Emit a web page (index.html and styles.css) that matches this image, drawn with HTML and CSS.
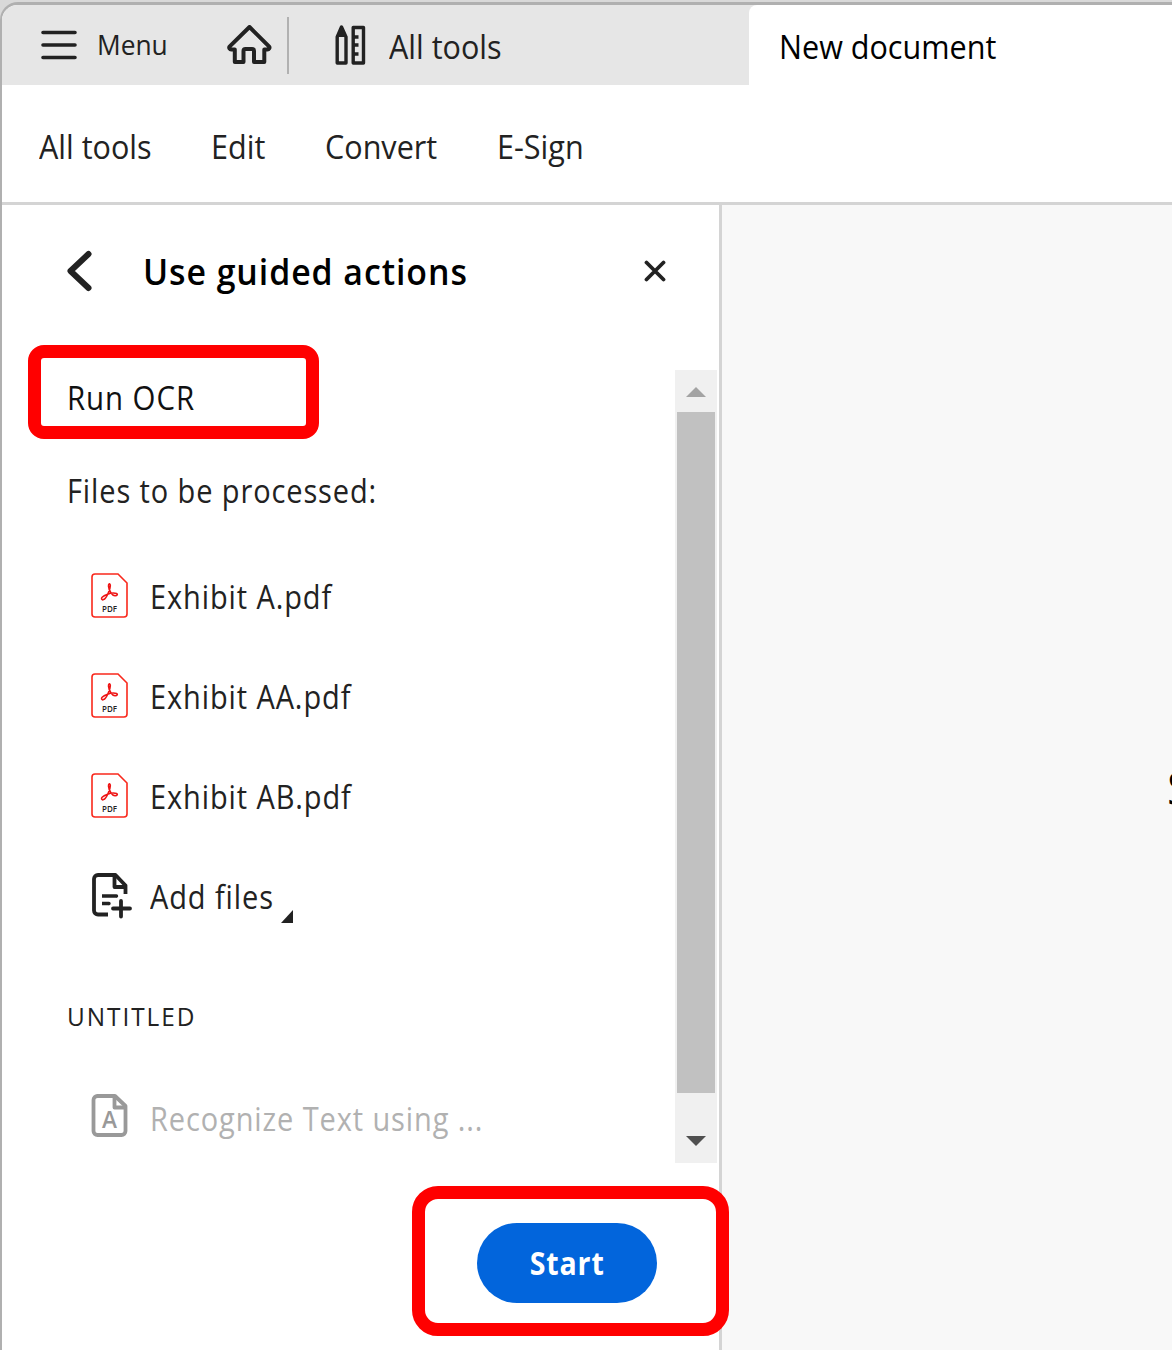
FILE: index.html
```html
<!DOCTYPE html>
<html lang="en">
<head>
    <meta charset="UTF-8">
    <meta name="viewport" content="width=device-width, initial-scale=1.0">
    <title>New document</title>
    <link rel="stylesheet" href="styles.css">
</head>
<body>

    <div class="window">
        <!-- Title bar with tabs -->
        <div class="tabbar">
            <div class="tabs">
                <svg class="menu-icon" width="36" height="30" viewBox="0 0 36 30" stroke="#222" stroke-width="3.6" stroke-linecap="round">
                    <path d="M2 2.5h32M2 15h32M2 27.5h32"/>
                </svg>
                <span class="menu-text">Menu</span>
                <svg class="home-icon" width="46" height="40" viewBox="0 0 46 40" fill="none" stroke="#222" stroke-width="4" stroke-linejoin="round">
                    <path d="M22.5 2L2.5 21.7c-.8 1.2.2 2.8 1.7 2.8h3.6v12.500h8.700V26c0-1.200.8-2 2-2h6.500c1.200 0 2 .8 2 2v11h10.300V24.500h3.200c1.500 0 2.500-1.600 1.700-2.800z"/>
                </svg>
                <span class="divider"></span>
                <svg class="tools-icon" width="31" height="42" viewBox="0 0 31 42" fill="none" stroke="#222" stroke-width="3.4" stroke-linejoin="round">
                    <path d="M2.200 13L6.500 3L11 13V39H2.200z"/>
                    <path d="M3 12L6.500 4L10 12z" fill="#222" stroke-width="2"/>
                    <path d="M18.200 3.500h10.300v35.500H18.200zM18 13h5.500M18 21h5.500M18 30h5.500"/>
                </svg>
                <span class="tools-text">All tools</span>
            </div>
            <div class="tab active"><span class="tab-text">New document</span></div>
        </div>

        <!-- Toolbar -->
        <div class="toolbar">
            <span class="tool t1">All tools</span>
            <span class="tool t2">Edit</span>
            <span class="tool t3">Convert</span>
            <span class="tool t4">E-Sign</span>
        </div>

        <div class="content">
            <!-- Guided actions panel -->
            <div class="panel">
                <div class="panel-header">
                    <svg width="26" height="42" viewBox="0 0 26 42" fill="none" stroke="#222" stroke-width="6" stroke-linecap="round" stroke-linejoin="round">
                        <path d="M22.500 4L4.500 21L22.500 38"/>
                    </svg>
                    <h2>Use guided actions</h2>
                    <svg class="close" width="22" height="22" viewBox="0 0 22 22" stroke="#222" stroke-width="3.800" stroke-linecap="round">
                        <path d="M2.500 2.500l17 17M19.500 2.500L2.500 19.500"/>
                    </svg>
                </div>

                <div class="panel-body">
                    <div class="list">
                        <div class="line run"><span>Run OCR</span></div>
                        <div class="line files"><span>Files to be processed:</span></div>

                        <div class="row">
                            <svg class="pdf" width="38" height="46" viewBox="0 0 38 46">
                                <path d="M5 1H28L37 10V41a3 3 0 0 1-3 3H5a3 3 0 0 1-3-3V4a3 3 0 0 1 3-3z" fill="#fff" stroke="#f9281c" stroke-width="1.600"/>
                                <path d="M12 26.500c-1.500-1.500 1-3.500 5-5 3-1.200 7-1.800 9.500-1 1.500.6.8 2.300-1.500 2.200-3-.2-6-4.500-6.500-9.500-.2-3 1.800-3 1.800-.5 0 3-3.500 12-6 13.500-.8.6-1.700.8-2.300.3z" fill="none" stroke="#ee1515" stroke-width="1.600"/>
                                <text x="19.500" y="39" text-anchor="middle" textLength="15" lengthAdjust="spacingAndGlyphs" class="pdf-text">PDF</text>
                            </svg>
                            <span>Exhibit A.pdf</span>
                        </div>
                        <div class="row">
                            <svg class="pdf" width="38" height="46" viewBox="0 0 38 46">
                                <path d="M5 1H28L37 10V41a3 3 0 0 1-3 3H5a3 3 0 0 1-3-3V4a3 3 0 0 1 3-3z" fill="#fff" stroke="#f9281c" stroke-width="1.600"/>
                                <path d="M12 26.500c-1.500-1.500 1-3.500 5-5 3-1.200 7-1.800 9.500-1 1.500.6.8 2.300-1.500 2.200-3-.2-6-4.500-6.500-9.500-.2-3 1.800-3 1.800-.5 0 3-3.500 12-6 13.500-.8.6-1.700.8-2.300.3z" fill="none" stroke="#ee1515" stroke-width="1.600"/>
                                <text x="19.500" y="39" text-anchor="middle" textLength="15" lengthAdjust="spacingAndGlyphs" class="pdf-text">PDF</text>
                            </svg>
                            <span>Exhibit AA.pdf</span>
                        </div>
                        <div class="row">
                            <svg class="pdf" width="38" height="46" viewBox="0 0 38 46">
                                <path d="M5 1H28L37 10V41a3 3 0 0 1-3 3H5a3 3 0 0 1-3-3V4a3 3 0 0 1 3-3z" fill="#fff" stroke="#f9281c" stroke-width="1.600"/>
                                <path d="M12 26.500c-1.500-1.500 1-3.500 5-5 3-1.200 7-1.800 9.500-1 1.500.6.8 2.300-1.500 2.200-3-.2-6-4.500-6.500-9.500-.2-3 1.800-3 1.800-.5 0 3-3.500 12-6 13.500-.8.6-1.700.8-2.300.3z" fill="none" stroke="#ee1515" stroke-width="1.600"/>
                                <text x="19.500" y="39" text-anchor="middle" textLength="15" lengthAdjust="spacingAndGlyphs" class="pdf-text">PDF</text>
                            </svg>
                            <span>Exhibit AB.pdf</span>
                        </div>
                        <div class="row">
                            <svg class="add" width="42" height="46" viewBox="0 0 42 46" fill="none" stroke="#222" stroke-width="3.800" stroke-linejoin="round">
                                <path d="M18 41.500H8a4 4 0 0 1-4-4V6a4 4 0 0 1 4-4H25.500L35.500 12.500v8.500"/>
                                <path d="M24.500 3v11h11"/>
                                <path d="M12 23h14.500l-1 .5M12 30.500h7l-1 .5" stroke-width="3.400"/>
                                <path d="M31 28v15.500M23 35.500h17" stroke-width="3.800" stroke-linecap="round"/>
                            </svg>
                            <span>Add files</span>
                            <svg class="corner" width="12" height="13" viewBox="0 0 12 13"><path d="M12 0V13H0z" fill="#222"/></svg>
                        </div>

                        <div class="line group"><span>UNTITLED</span></div>

                        <div class="row disabled">
                            <svg class="ocr" width="38" height="44" viewBox="0 0 38 44" fill="none" stroke="#999" stroke-width="3.800" stroke-linejoin="round">
                                <path d="M7 2H25L35.500 12V37a4 4 0 0 1-4 4H7.500a4 4 0 0 1-4-4V6a4 4 0 0 1 4-4z"/>
                                <path d="M24.500 3v10.500h11"/>
                                <text x="19.500" y="34" text-anchor="middle" textLength="15" lengthAdjust="spacingAndGlyphs" class="ocr-text">A</text>
                            </svg>
                            <span>Recognize Text using ...</span>
                        </div>
                    </div>
                    <div class="scrollbar">
                        <div class="arrow up"></div>
                        <div class="thumb"></div>
                        <div class="arrow down"></div>
                    </div>
                </div>

                <div class="panel-footer">
                    <button><span>Start</span></button>
                </div>
            </div>

            <!-- Document area -->
            <div class="document"><span>S</span></div>
        </div>
    </div>

    <!-- Red highlights -->
    <div class="highlight highlight-run"></div>
    <div class="highlight highlight-start"></div>

</body>
</html>
```

FILE: styles.css
```css
* {
    box-sizing: border-box;
}
body {
    margin: 0;
    padding-top: 2px;
    height: 1350px;
    overflow: hidden;
    background-color: #d9d9d9;
    font-family: "Open Sans", "Noto Sans", sans-serif;
    font-size: 32px;
    color: #222;
}
svg {
    flex: none;
}
span, h2 {
    white-space: nowrap;
    transform-origin: left center;
}
.window {
    height: 1348px;
    display: flex;
    flex-direction: column;
    border-top: 3px solid #b0b0b0;
    border-left: 2px solid #b0b0b0;
    border-radius: 18px 0 0 0;
    background-color: white;
    overflow: hidden;
}
.tabbar {
    height: 80px;
    flex: none;
    display: flex;
    background-color: #e6e6e6;
}
.tabs {
    width: 747px;
    display: flex;
    align-items: center;
    padding-left: 39px;
}
.menu-text {
    width: 70px;
    margin: 0 60px 2px 20px;
    font-size: 28px;
    transform: scaleX(0.94);
}
.divider {
    width: 2px;
    height: 57px;
    margin: 0 46px 0 14px;
    background-color: #b1b1b1;
}
.tools-text {
    margin: 2px 0 0 23px;
}
.tools-text, .tab-text, .tool {
    transform: scaleX(0.955);
}
.tab {
    flex: 1;
    display: flex;
    align-items: center;
    padding: 2px 0 0 30px;
    background-color: white;
    border-radius: 8px 0 0 0;
    color: #000;
}
.toolbar {
    height: 120px;
    flex: none;
    display: flex;
    align-items: center;
    padding: 6px 0 0 37px;
    border-bottom: 3px solid #d4d4d4;
}
.t1 {
    width: 172px;
}
.t2 {
    width: 114px;
}
.t3 {
    width: 172px;
}
.content {
    flex: 1;
    display: flex;
    min-height: 0;
}
.panel {
    width: 720px;
    flex: none;
    border-right: 3px solid #d4d4d4;
}
.panel-header {
    height: 132px;
    display: flex;
    align-items: center;
    padding: 0 53px 0 64px;
}
h2 {
    flex: 1;
    margin: 0 0 0 51px;
    font-size: 36px;
    font-weight: 600;
    letter-spacing: 1px;
    transform: scaleX(0.94);
    color: #000;
}
.panel-body {
    height: 793px;
    margin-top: 33px;
    display: flex;
    justify-content: space-between;
    letter-spacing: 1px;
}
.line {
    display: flex;
    align-items: center;
    padding-left: 65px;
}
.run {
    height: 54px;
    color: #111;
}
.run span {
    transform: scaleX(0.92);
}
.files {
    height: 122px;
    padding-top: 10px;
}
.files span, .row span {
    transform: scaleX(0.905);
}
.row {
    height: 100px;
    display: flex;
    align-items: center;
    padding-left: 88px;
}
.row span {
    margin-left: 22px;
}
.row .add + span {
    margin-left: 18px;
}
.corner {
    margin: 40px 0 0 -6px;
}
.group {
    height: 139px;
    font-size: 25px;
    letter-spacing: 2px;
}
.group span {
    transform: scaleX(0.975);
}
.disabled {
    height: 62px;
    color: #b1b1b1;
}
.disabled span {
    margin-top: 4px;
}
.pdf-text {
    font-size: 9.5px;
    font-weight: 600;
    letter-spacing: 0;
    fill: #222;
}
.ocr-text {
    font-size: 23px;
    font-weight: 600;
    letter-spacing: 0;
    fill: #999;
    stroke: none;
}
.scrollbar {
    width: 42px;
    margin-right: 2px;
    padding: 17px 2px;
    display: flex;
    flex-direction: column;
    align-items: center;
    background-color: #f0f0f0;
}
.arrow {
    border: 10px solid transparent;
}
.up {
    border-top: none;
    border-bottom-color: #a3a3a3;
}
.down {
    border-bottom: none;
    border-top-color: #505050;
    margin-top: 43px;
}
.thumb {
    width: 38px;
    height: 681px;
    margin-top: 15px;
    background-color: #c1c1c1;
}
.panel-footer {
    display: flex;
    justify-content: flex-end;
    padding: 60px 62px 0 0;
}
button {
    width: 180px;
    height: 80px;
    padding: 0 0 2px;
    border: none;
    border-radius: 40px;
    background-color: #0265dc;
    color: white;
    font-family: inherit;
    font-size: 32px;
    font-weight: 700;
    letter-spacing: 1px;
}
button span {
    display: inline-block;
    transform: scaleX(0.89);
    transform-origin: center;
}
.document {
    flex: 1;
    min-width: 0;
    padding: 552px 0 0 445px;
    overflow: hidden;
    background-color: #f8f8f8;
    color: #000;
    font-size: 46px;
    line-height: 60px;
}
.highlight {
    position: absolute;
    border: 13px solid #ff0000;
}
.highlight-run {
    left: 28px;
    top: 345px;
    width: 291px;
    height: 94px;
    border-radius: 16px;
}
.highlight-start {
    left: 412px;
    top: 1186px;
    width: 317px;
    height: 150px;
    border-radius: 26px;
}
```
